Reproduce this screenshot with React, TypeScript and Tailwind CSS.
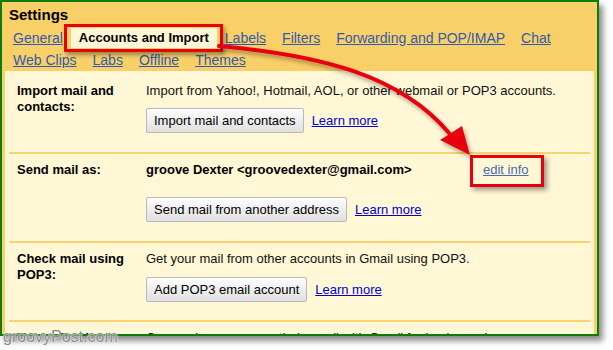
import React from 'react';

const font = "font-['Liberation_Sans',Arial,sans-serif]";

const Btn = ({ children }: { children: React.ReactNode }) => (
  <button className="h-[25px] px-[7px] border border-[#b9b9b9] rounded-[2px] bg-gradient-to-b from-[#fdfdfd] to-[#e0e0e0] text-[13px] leading-[16px] text-black whitespace-nowrap">
    {children}
  </button>
);

const LearnMore = () => (
  <a className="ml-2 text-[13px] leading-[16px] text-[#0000cc] underline cursor-pointer">Learn more</a>
);

const Sep = () => <div className="mx-1 h-[2px] bg-[#f9d36f] shrink-0" />;

const Row = ({ label, className, children }: { label: React.ReactNode; className: string; children: React.ReactNode }) => (
  <div className={`flex px-3 shrink-0 ${className}`}>
    <div className="w-[129px] pr-3 font-bold text-[13px] leading-[16px] text-black">{label}</div>
    <div className="flex-1 flex flex-col text-[13px] leading-[16px] text-[#111]">{children}</div>
  </div>
);

const TabLink = ({ children }: { children: React.ReactNode }) => (
  <a className="text-[#2f5bb0] underline cursor-pointer whitespace-nowrap">{children}</a>
);

export default function App() {
  return (
    <div className={`relative w-[613px] h-[350px] bg-white overflow-hidden ${font}`}>
      <div className="w-[599px] h-[336px] border-2 border-[#0a7d0a] bg-[#f9cf67] shadow-[4px_5px_6px_rgba(0,0,0,0.45)] overflow-hidden flex flex-col">
        {/* header */}
        <div className="pl-[7px] pt-[4px]">
          <div className="text-[15px] leading-[18px] font-bold text-black">Settings</div>
          <div className="mt-[3px] pl-[4px] flex items-center gap-4 h-[22px] text-[14px]">
            <TabLink>General</TabLink>
            <span className="relative -mx-[8px] px-[8px] h-[20px] leading-[20px] bg-[#fff7d6] font-bold text-[13px] text-black whitespace-nowrap">
              Accounts and Import
              <span className="absolute -left-[7px] -right-[6px] -top-[4px] -bottom-[4px] border-[3px] border-[#e8000d] shadow-[2px_3px_4px_rgba(0,0,0,0.35)]" />
            </span>
            <TabLink>Labels</TabLink>
            <TabLink>Filters</TabLink>
            <TabLink>Forwarding and POP/IMAP</TabLink>
            <TabLink>Chat</TabLink>
          </div>
          <div className="pl-[4px] flex items-center gap-4 h-[22px] text-[14px]">
            <TabLink>Web Clips</TabLink>
            <TabLink>Labs</TabLink>
            <TabLink>Offline</TabLink>
            <TabLink>Themes</TabLink>
          </div>
        </div>

        {/* content */}
        <div className="mx-[3px] flex-1 bg-[#fff7d6] flex flex-col">
          <Row label={<>Import mail and contacts:</>} className="h-[81px] pt-[12px]">
            <div>Import from Yahoo!, Hotmail, AOL, or other webmail or POP3 accounts.</div>
            <div className="mt-[9px] flex items-center">
              <Btn>Import mail and contacts</Btn>
              <LearnMore />
            </div>
          </Row>
          <Sep />
          <Row label="Send mail as:" className="h-[87px] pt-[8px]">
            <div className="flex">
              <span className="w-[337px] font-bold text-black">groove Dexter &lt;groovedexter@gmail.com&gt;</span>
              <span className="relative">
                <a className="text-[#4a6cb0] underline cursor-pointer">edit info</a>
                <span className="absolute -left-[13px] -right-[15px] -top-[7px] -bottom-[9px] border-[3px] border-[#e8000d] shadow-[3px_3px_5px_rgba(0,0,0,0.4)]" />
              </span>
            </div>
            <div className="mt-[19px] flex items-center">
              <Btn>Send mail from another address</Btn>
              <LearnMore />
            </div>
          </Row>
          <Sep />
          <Row label="Check mail using POP3:" className="h-[77px] pt-[8px]">
            <div>Get your mail from other accounts in Gmail using POP3.</div>
            <div className="mt-[10px] flex items-center">
              <Btn>Add POP3 email account</Btn>
              <LearnMore />
            </div>
          </Row>
          <Sep />
          <Row label="Using Gmail for work?" className="pt-[8px]">
            <div>Companies can power their email with Gmail for business. Learn more</div>
          </Row>
        </div>
      </div>

      {/* annotation arrow */}
      <svg className="absolute left-0 top-0 pointer-events-none" width="613" height="350" viewBox="0 0 613 350">
        <defs>
          <filter id="sh" x="-10%" y="-10%" width="130%" height="130%">
            <feDropShadow dx="2" dy="3" stdDeviation="2" floodColor="#000" floodOpacity="0.35" />
          </filter>
        </defs>
        <g filter="url(#sh)">
          <path d="M219 46 C 320 55, 400 75, 449 133" fill="none" stroke="#e8000d" strokeWidth="4" strokeLinecap="round" />
          <polygon points="440,140 462,126 470,155" fill="#e8000d" />
        </g>
      </svg>

      <div className="absolute left-[3px] top-[328px] text-[16px] leading-[18px] text-[#8a8a8a] [text-shadow:0_0_2px_#fff,0_0_1px_#fff]">
        groovyPost.com
      </div>
    </div>
  );
}
